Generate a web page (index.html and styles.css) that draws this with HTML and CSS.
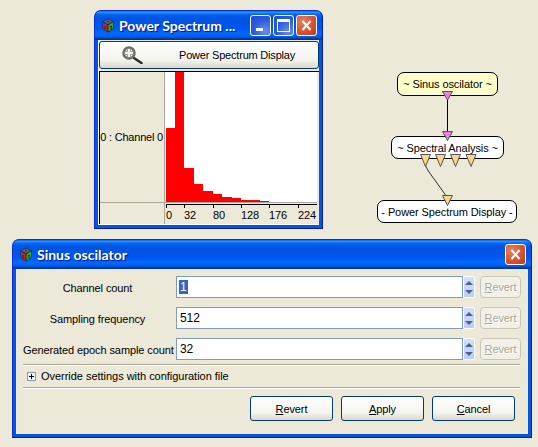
FILE: index.html
```html
<!DOCTYPE html>
<html lang="en">
<head>
    <meta charset="UTF-8">
    <meta name="viewport" content="width=device-width, initial-scale=1.0">
    <title>Power Spectrum Display</title>
    <link rel="stylesheet" href="styles.css">
</head>
<body>

<svg width="0" height="0" class="defs">
    <symbol id="cube" viewBox="0 0 12 15">
        <path d="M6 .5 11.500 3.500V10.500L6 14.500.5 10.500V3.500Z" fill="#222"/>
        <path d="M1 4.200 5.500 7V13.600L1 10.200Z" fill="#e01818"/>
        <path d="M1 4.200 3 5.500V7L1 6.500Z" fill="#2a4fd0"/>
        <path d="M6.500 7 11 4.200V10.200L6.500 13.600Z" fill="#22b02a"/>
        <path d="M6 1.200 10.600 3.600 6 6.200 1.400 3.600Z" fill="#5a6490"/>
        <path d="M3 8v3M8 8.500h2M9 8.500v3M5 3l2 1" stroke="#222" fill="none"/>
    </symbol>
    <symbol id="close" viewBox="0 0 21 21">
        <path d="M6 5.500 15 15.500M15 5.500 6 15.500" stroke="#fff" stroke-width="2.200"/>
    </symbol>
</svg>

<!-- spectrum window -->
<div class="window spectrum">
    <div class="titlebar">
        <svg class="cube" width="12" height="15"><use href="#cube"/></svg>
        <span class="title">Power Spectrum ...</span>
        <span class="winbtn"><i class="min-mark"></i></span>
        <span class="winbtn"><i class="max-mark"></i></span>
        <span class="winbtn red"><svg width="19" height="19" viewBox="0 0 21 21"><use href="#close"/></svg></span>
    </div>
    <div class="client">
        <button class="display-btn" type="button">
            <svg class="lens" width="22" height="18" viewBox="0 0 22 18">
                <path d="M12 12 19.500 17" stroke="#2c2c2c" stroke-width="2.500" stroke-linecap="round"/>
                <circle cx="7" cy="7" r="5.500" fill="#f2f2ee" stroke="#6c6c68" stroke-width="2.500"/>
                <path d="M5.500 2.500v3h-3M8.500 2.500v3h3M5.500 11.500v-3h-3M8.500 11.500v-3h3" fill="none" stroke="#9a9a94"/>
            </svg>
            <span>Power Spectrum Display</span>
        </button>
        <div class="plot">
            <div class="channel-col">
                <div class="channel">0 : Channel 0</div>
                <div class="channel-foot"></div>
            </div>
            <svg class="chart" width="153" height="153" viewBox="165 72 153 153">
                <rect x="165" y="72" width="152" height="130" fill="#fff"/>
                <g fill="#f00">
                    <rect x="166" y="128" width="9" height="74"/>
                    <rect x="175" y="72" width="9" height="130"/>
                    <rect x="184" y="168" width="10" height="34"/>
                    <rect x="194" y="184" width="9" height="18"/>
                    <rect x="203" y="191" width="10" height="11"/>
                    <rect x="213" y="194" width="9" height="8"/>
                    <rect x="222" y="197" width="10" height="5"/>
                    <rect x="232" y="198" width="9" height="4"/>
                    <rect x="241" y="200" width="10" height="2"/>
                    <rect x="251" y="200" width="9" height="2"/>
                    <rect x="260" y="201" width="9" height="1"/>
                </g>
                <rect x="165" y="202" width="152" height="1" fill="#aca899"/>
                <rect x="166" y="204" width="151" height="1" fill="#000"/>
                <path d="M166.500 204v4M184.500 204v4M213.500 204v4M241.500 204v4M269.500 204v4M298.500 204v4" stroke="#000"/>
                <g class="ticks">
                    <text x="166" y="219">0</text>
                    <text x="184" y="219">32</text>
                    <text x="213" y="219">80</text>
                    <text x="241" y="219">128</text>
                    <text x="269" y="219">176</text>
                    <text x="298" y="219">224</text>
                </g>
            </svg>
        </div>
    </div>
</div>

<!-- box graph -->
<div class="graph">
    <svg class="wires" width="160" height="170" viewBox="370 60 160 170">
        <path d="M447.500 98V134" stroke="#000"/>
        <path d="M425 165 429 172 447 197" stroke="#000" fill="none" stroke-width="0.800"/>
    </svg>
    <div class="node sinus">~ Sinus oscilator ~</div>
    <div class="node analysis">~ Spectral Analysis ~</div>
    <div class="node display">- Power Spectrum Display -</div>
    <svg class="wires" width="160" height="170" viewBox="370 60 160 170">
        <g fill="#ec82dc" stroke="#555">
            <path d="M442.500 91.500H452.500L447.500 100Z"/>
            <path d="M442.500 131.500H452.500L447.500 140.500Z"/>
        </g>
        <g fill="#fbd58c" stroke="#555">
            <path d="M420.500 154.500H430.500L425.500 166.500Z"/>
            <path d="M435.500 154.500H445.500L440.500 166.500Z"/>
            <path d="M450.500 154.500H460.500L455.500 166.500Z"/>
            <path d="M466 154.500H476L471 166.500Z"/>
            <path d="M442.500 195.500H452.500L447.500 205.500Z"/>
        </g>
    </svg>
</div>

<!-- settings dialog -->
<div class="window sinus-dialog">
    <div class="titlebar">
        <svg class="cube" width="12" height="15"><use href="#cube"/></svg>
        <span class="title">Sinus oscilator</span>
        <span class="winbtn red"><svg width="19" height="19" viewBox="0 0 21 21"><use href="#close"/></svg></span>
    </div>
    <div class="client form">
        <div class="row">
            <label>Channel count</label>
            <div class="field"><span class="selected">1</span></div>
            <div class="spin"><i class="up"></i><i class="down"></i></div>
            <button class="revert" type="button" disabled><u>R</u>evert</button>
        </div>
        <div class="row">
            <label>Sampling frequency</label>
            <div class="field">512</div>
            <div class="spin"><i class="up"></i><i class="down"></i></div>
            <button class="revert" type="button" disabled><u>R</u>evert</button>
        </div>
        <div class="row">
            <label>Generated epoch sample count</label>
            <div class="field">32</div>
            <div class="spin"><i class="up"></i><i class="down"></i></div>
            <button class="revert" type="button" disabled><u>R</u>evert</button>
        </div>
        <div class="override">
            <span class="plus"></span>
            <span>Override settings with configuration file</span>
        </div>
        <div class="actions">
            <button type="button"><u>R</u>evert</button>
            <button type="button"><u>A</u>pply</button>
            <button type="button"><u>C</u>ancel</button>
        </div>
    </div>
</div>

</body>
</html>
```

FILE: styles.css
```css
body {
    margin: 0;
    width: 538px;
    height: 447px;
    overflow: hidden;
    position: relative;
    background-color: #ece9d8;
    font-family: "Liberation Sans", sans-serif;
    font-size: 11px;
    letter-spacing: -0.1px;
    color: #000;
}
.defs {
    position: absolute;
}
button {
    font: inherit;
    letter-spacing: inherit;
    color: #000;
    padding: 0;
}

/* windows */
.window {
    position: absolute;
    box-sizing: border-box;
    display: flex;
    flex-direction: column;
    background: #0855dd;
    border: 1px solid #0831d9;
    border-right-color: #001ea0;
    border-bottom-color: #001ea0;
    border-radius: 7px 7px 0 0;
    padding: 0 3px 3px;
}
.spectrum {
    left: 94px;
    top: 10px;
    width: 229px;
    height: 219px;
}
.sinus-dialog {
    left: 12px;
    top: 239px;
    width: 520px;
    height: 199px;
}
.titlebar {
    height: 29px;
    flex: none;
    display: flex;
    align-items: center;
    gap: 2px;
    margin: 0 -3px;
    padding: 0 5px 0 7px;
    border-radius: 6px 6px 0 0;
    background: linear-gradient(#0058ee 0%, #3593ff 4%, #288eff 6%, #127dff 8%, #036ffc 10%, #0262ee 14%, #0057e5 20%, #0054e3 24%, #0055eb 56%, #005bf5 66%, #026afe 76%, #0062ef 86%, #0052d6 92%, #0040ab 94%, #003092 100%);
}
.cube {
    flex: none;
    margin-right: 3px;
}
.title {
    flex: 1;
    font-family: Lato, sans-serif;
    font-size: 14px;
    font-weight: bold;
    letter-spacing: 0;
    color: #fff;
    text-shadow: 1px 1px 1px #0f1089;
    white-space: nowrap;
}
.winbtn {
    box-sizing: border-box;
    width: 21px;
    height: 21px;
    flex: none;
    display: flex;
    align-items: center;
    justify-content: center;
    position: relative;
    border: 1px solid #fff;
    border-radius: 3px;
    background: radial-gradient(circle at 75% 80%, #6a8df0, #2b5be0 55%, #2149d0);
}
.winbtn.red {
    background: radial-gradient(circle at 30% 30%, #e8805c, #d9532f 55%, #bf3a16);
}
.min-mark {
    width: 7px;
    height: 3px;
    background: #fff;
    position: absolute;
    left: 5px;
    bottom: 4px;
}
.max-mark {
    box-sizing: border-box;
    width: 13px;
    height: 13px;
    border: 1px solid #fff;
    border-top-width: 3px;
}
.client {
    flex: 1;
    display: flex;
    flex-direction: column;
    min-height: 0;
    background: #ece9d8;
}

/* spectrum */
.spectrum .client {
    border-left: 1px solid #fff;
    border-bottom: 1px solid #fff;
    padding-top: 1px;
}
.display-btn {
    box-sizing: border-box;
    height: 28px;
    margin: 0 0 2px 0;
    width: 220px;
    display: flex;
    align-items: center;
    padding-left: 22px;
    gap: 35px;
    border: 1px solid #003c74;
    border-radius: 3px;
    letter-spacing: -0.2px;
    background: linear-gradient(#fff, #f3f3ee 70%, #dcd8c8);
}
.lens {
    flex: none;
}
.plot {
    flex: 1;
    display: flex;
    border-top: 1px solid #000;
    border-left: 1px solid #000;
    min-height: 0;
}
.channel-col {
    box-sizing: border-box;
    width: 65px;
    flex: none;
    display: flex;
    flex-direction: column;
    border-right: 1px solid #aca899;
}
.channel {
    flex: 1;
    display: flex;
    align-items: center;
    justify-content: flex-end;
    padding-right: 1px;
    letter-spacing: -0.2px;
    white-space: nowrap;
}
.channel-foot {
    height: 21px;
    border-top: 1px solid #aca899;
}
.chart {
    flex: none;
    display: block;
}
.ticks text {
    font-size: 11px;
    fill: #000;
}

/* graph */
.graph {
    position: absolute;
    left: 370px;
    top: 60px;
    width: 160px;
    height: 170px;
}
.wires {
    position: absolute;
    left: 0;
    top: 0;
}
.node {
    position: absolute;
    box-sizing: border-box;
    display: flex;
    align-items: center;
    justify-content: center;
    border: 1px solid #000;
    border-radius: 7px;
    background: #fff;
    white-space: nowrap;
}
.node.sinus {
    left: 27px;
    top: 12px;
    width: 101px;
    height: 24px;
    background: #ffffc8;
}
.node.analysis {
    left: 21px;
    top: 76px;
    width: 113px;
    height: 23px;
}
.node.display {
    left: 7px;
    top: 140px;
    width: 140px;
    height: 23px;
}

/* dialog */
.form {
    padding: 7px 11px 0 7px;
}
.row {
    height: 22px;
    margin-bottom: 9px;
    display: flex;
    align-items: center;
}
.row label {
    width: 149px;
    padding-top: 1px;
    margin-right: 4px;
    flex: none;
    text-align: center;
    white-space: nowrap;
}
.field {
    box-sizing: border-box;
    width: 287px;
    height: 22px;
    flex: none;
    display: flex;
    align-items: center;
    padding-left: 3px;
    background: #fff;
    border: 1px solid #7f9db9;
    font-size: 12px;
}
.selected {
    background: #316ac5;
    color: #fff;
    padding: 0 1px;
    margin-left: -1px;
}
.spin {
    box-sizing: border-box;
    width: 12px;
    height: 22px;
    flex: none;
    display: flex;
    flex-direction: column;
    align-items: center;
    justify-content: center;
    gap: 5px;
    margin-right: 5px;
    background: linear-gradient(#d2e0fb, #b9ccf6);
    border: 1px solid #fff;
    border-radius: 2px;
}
.spin i {
    width: 0;
    height: 0;
    border-left: 4px solid transparent;
    border-right: 4px solid transparent;
}
.spin .up {
    border-bottom: 4px solid #4d6185;
}
.spin .down {
    border-top: 4px solid #4d6185;
}
.revert {
    box-sizing: border-box;
    width: 41px;
    height: 22px;
    flex: none;
    border: 1px solid #c9c7ba;
    border-radius: 4px;
    background: #f3f1e7;
    color: #aca899;
    text-shadow: 1px 1px 0 #fff;
}
.override {
    box-sizing: border-box;
    height: 24px;
    margin-top: -5px;
    display: flex;
    align-items: center;
    gap: 5px;
    padding-left: 4px;
    border-top: 1px solid #aca899;
    border-bottom: 1px solid #aca899;
    box-shadow: 0 1px 0 #fff, inset 0 1px 0 #fff;
    width: 497px;
    letter-spacing: -0.03px;
}
.plus {
    box-sizing: border-box;
    width: 9px;
    height: 9px;
    flex: none;
    border: 1px solid #7f9db9;
    background:
        linear-gradient(#000, #000) center / 5px 1px no-repeat,
        linear-gradient(#000, #000) center / 1px 5px no-repeat,
        #f4f4ee;
}
.actions {
    display: flex;
    justify-content: flex-end;
    gap: 8px;
    margin-top: 8px;
    width: 492px;
}
.actions button {
    box-sizing: border-box;
    width: 83px;
    height: 25px;
    border: 1px solid #003c74;
    border-radius: 3px;
    background: linear-gradient(#fff, #f3f3ee 70%, #dcd8c8);
}
```
